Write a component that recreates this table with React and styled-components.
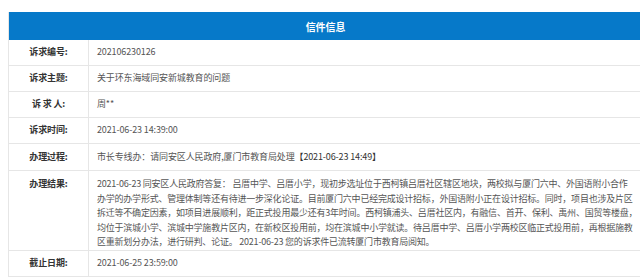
import React from "react";
import styled, { createGlobalStyle } from "styled-components";

const Global = createGlobalStyle`
  html, body { margin: 0; padding: 0; background: #fff; overflow: hidden; }
  body {
    padding: 12px 0 0 8px;
    font-family: "Microsoft YaHei", "Noto Sans CJK SC", "Liberation Sans", sans-serif;
  }
`;

const Table = styled.div`
  width: 634px;
  border-left: 1px solid #e6e6e6;
  box-sizing: border-box;
`;

const Header = styled.div`
  height: 28px;
  background: #0679c9;
  color: #fff;
  font-size: 10px;
  font-weight: bold;
  display: flex;
  align-items: center;
  justify-content: center;
  letter-spacing: -0.1px;
`;

const Row = styled.div`
  display: grid;
  grid-template-columns: 80px 1fr;
  min-height: ${(p) => p.$h}px;
  border-bottom: 1px solid #e6e6e6;
  box-sizing: border-box;
`;

const Label = styled.div`
  border-right: 1px solid #e6e6e6;
  display: flex;
  justify-content: center;
  align-items: ${(p) => (p.$top ? "flex-start" : "center")};
  padding-top: ${(p) => (p.$top ? "6px" : "0")};
  font-size: 9px;
  line-height: 14.6px;
  font-weight: bold;
  color: #333;
  letter-spacing: -0.13px;
  white-space: pre;
`;

const Value = styled.div`
  display: flex;
  flex-direction: ${(p) => (p.$top ? "column" : "row")};
  align-items: ${(p) => (p.$top ? "flex-start" : "center")};
  padding: ${(p) => (p.$top ? "6px 2px 0 8px" : "0 2px 0 8px")};
  font-size: 9px;
  line-height: 14.6px;
  color: #555;
  letter-spacing: -0.13px;
  min-width: 0;
`;

const Line = styled.span`
  display: block;
  white-space: pre;
  letter-spacing: -0.22px;
`;

const Strong = styled.span`
  color: #333;
`;

const rows = [
  { label: "诉求编号:", value: "202106230126", h: 26 },
  { label: "诉求主题:", value: "关于环东海域同安新城教育的问题", h: 26 },
  { label: "诉 求 人:", value: "周**", h: 26 },
  { label: "诉求时间:", value: "2021-06-23 14:39:00", h: 26 },
];

const resultLines = [
  "2021-06-23 同安区人民政府答复： 吕厝中学、吕厝小学，现初步选址位于西柯镇吕厝社区辖区地块，两校拟与厦门六中、外国语附小合作",
  "办学的办学形式、管理体制等还有待进一步深化论证。目前厦门六中已经完成设计招标，外国语附小正在设计招标。同时，项目也涉及片区",
  "拆迁等不确定因素，如项目进展顺利，距正式投用最少还有3年时间。西柯镇浦头、吕厝社区内，有融信、首开、保利、禹州、国贸等楼盘，",
  "均位于滨城小学、滨城中学施教片区内，在新校区投用前，均在滨城中小学就读。待吕厝中学、吕厝小学两校区临正式投用前，再根据施教",
  "区重新划分办法，进行研判、论证。 2021-06-23 您的诉求件已流转厦门市教育局阅知。",
];

export default function App() {
  return (
    <>
      <Global />
      <Table>
        <Header>信件信息</Header>
        {rows.map((r) => (
          <Row key={r.label} $h={r.h}>
            <Label>{r.label}</Label>
            <Value>{r.value}</Value>
          </Row>
        ))}
        <Row $h={27}>
          <Label>办理过程:</Label>
          <Value>
            <span>
              市长专线办：请同安区人民政府,厦门市教育局处理
              <Strong>【2021-06-23 14:49】</Strong>
            </span>
          </Value>
        </Row>
        <Row $h={78}>
          <Label $top>办理结果:</Label>
          <Value $top>
            {resultLines.map((l, i) => (
              <Line key={i}>{l}</Line>
            ))}
          </Value>
        </Row>
        <Row $h={26}>
          <Label>截止日期:</Label>
          <Value>2021-06-25 23:59:00</Value>
        </Row>
      </Table>
    </>
  );
}
